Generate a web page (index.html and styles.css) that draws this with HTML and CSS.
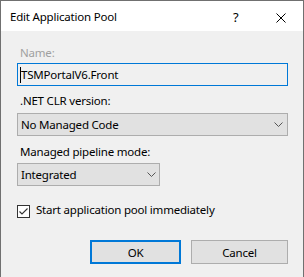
FILE: index.html
```html
<!DOCTYPE html>
<html lang="en">
<head>
    <meta charset="UTF-8">
    <meta name="viewport" content="width=device-width, initial-scale=1.0">
    <title>Edit Application Pool</title>
    <link rel="stylesheet" href="styles.css">
</head>
<body>
    <div class="dialog">
        <!-- Title bar -->
        <div class="titlebar">
            <span class="title">Edit Application Pool</span>
            <span class="help">?</span>
            <span class="close">
                <svg width="10" height="10" viewBox="0 0 10 10">
                    <path d="M0.5 0.5 L9.5 9.5 M9.5 0.5 L0.5 9.5" stroke="#000" stroke-width="1" fill="none"/>
                </svg>
            </span>
        </div>

        <div class="content">
            <div class="field-label label-name disabled">Name:</div>
            <div class="textbox"><span class="caret"></span>TSMPortalV6.Front</div>

            <div class="field-label label-clr">.NET CLR version:</div>
            <div class="combo">
                <span>No Managed Code</span>
                <svg class="chevron" width="9" height="5" viewBox="0 0 9 5">
                    <path d="M0.5 0.5 L4.5 4.5 L8.5 0.5" stroke="#555" stroke-width="1" fill="none"/>
                </svg>
            </div>

            <div class="field-label label-pipeline">Managed pipeline mode:</div>
            <div class="combo combo-small">
                <span>Integrated</span>
                <svg class="chevron" width="9" height="5" viewBox="0 0 9 5">
                    <path d="M0.5 0.5 L4.5 4.5 L8.5 0.5" stroke="#555" stroke-width="1" fill="none"/>
                </svg>
            </div>

            <div class="check-row">
                <span class="checkbox">
                    <svg width="11" height="11" viewBox="0 0 11 11">
                        <path d="M1.5 5.5 L4 8 L9.5 2.5" stroke="#333" stroke-width="1.1" fill="none"/>
                    </svg>
                </span>
                <span class="check-text">Start application pool immediately</span>
            </div>

            <div class="buttons">
                <button class="btn btn-ok">OK</button>
                <button class="btn btn-cancel">Cancel</button>
            </div>
        </div>
    </div>
</body>
</html>
```

FILE: styles.css
```css
body {
    margin: 0;
    padding: 0;
    font-family: "Noto Sans", "Open Sans", sans-serif;
    font-size: 11.5px;
    letter-spacing: -0.2px;
    color: #000;
    background-color: #f0f0f0;
}

/* Window frame */
.dialog {
    width: 304px;
    height: 277px;
    box-sizing: border-box;
    border: 1px solid #707070;
    border-bottom: none;
    background-color: #f0f0f0;
}

/* Title bar */
.titlebar {
    height: 30px;
    background-color: #fff;
    display: flex;
    align-items: flex-start;
    padding-top: 8px;
    padding-left: 9px;
    box-sizing: border-box;
    line-height: 16px;
}

.title {
    flex: 1;
}

.help {
    width: 12px;
    margin-right: 31px;
    font-size: 13px;
}

.close {
    width: 10px;
    margin-top: 4px;
    margin-right: 17px;
    display: flex;
}

/* Form content */
.content {
    padding: 14px 16px 0 16px;
    width: 271px;
}

.field-label {
    line-height: 16px;
    padding-left: 3px;
}

.disabled {
    color: #a0a0a0;
}

.label-name {
    margin-bottom: 2px;
}

.label-clr {
    margin-top: 7px;
    margin-bottom: 4px;
}

.label-pipeline {
    margin-top: 8px;
    margin-bottom: 3px;
}

.textbox {
    height: 23px;
    box-sizing: border-box;
    border: 1px solid #0078d7;
    background-color: #f0f0f0;
    display: flex;
    align-items: center;
    padding-left: 2px;
    line-height: 16px;
}

.caret {
    width: 1px;
    height: 16px;
    background-color: #000;
}

.combo {
    height: 23px;
    box-sizing: border-box;
    border: 1px solid #adadad;
    background-color: #e1e1e1;
    display: flex;
    align-items: center;
    justify-content: space-between;
    padding: 0 4px 0 3px;
    line-height: 16px;
}

.combo-small {
    width: 143px;
    padding-right: 3px;
}

.chevron {
    display: block;
}

/* Checkbox row */
.check-row {
    display: flex;
    align-items: flex-start;
    margin-top: 16px;
    line-height: 16px;
}

.checkbox {
    width: 13px;
    height: 13px;
    box-sizing: border-box;
    border: 1px solid #333;
    background-color: #fff;
    margin-top: 3px;
    margin-right: 6px;
    display: flex;
    align-items: center;
    justify-content: center;
}

.checkbox svg {
    display: block;
}

/* Dialog buttons */
.buttons {
    display: flex;
    justify-content: flex-end;
    gap: 10px;
    margin-top: 22px;
}

.btn {
    height: 24px;
    box-sizing: border-box;
    border: 1px solid #adadad;
    background-color: #e1e1e1;
    font-family: inherit;
    font-size: 11.5px;
    letter-spacing: -0.2px;
    color: #000;
    padding: 0;
}

.btn-ok {
    width: 91px;
    border: 2px solid #0078d7;
}

.btn-cancel {
    width: 97px;
}
```
